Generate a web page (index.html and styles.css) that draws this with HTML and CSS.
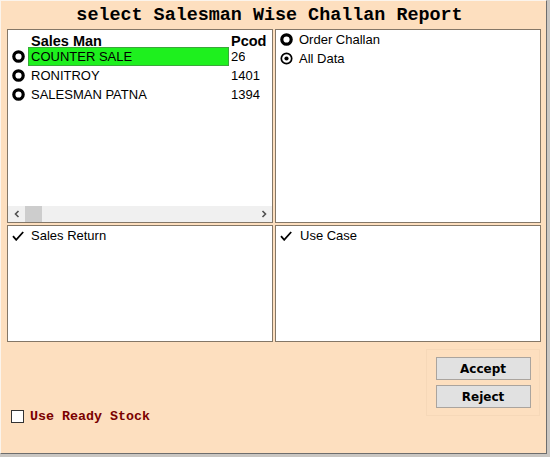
FILE: index.html
```html
<!DOCTYPE html>
<html>
<head>
<meta charset="utf-8">
<link rel="stylesheet" href="styles.css">
</head>
<body>
<div class="window">
  <h1 class="title">select Salesman Wise Challan Report</h1>
  <div class="panels">
    <div class="panel list-panel">
      <div class="list">
        <div class="row head">
          <span class="rcell"></span>
          <span class="name">Sales Man</span>
          <span class="code">Pcod</span>
        </div>
        <div class="row">
          <span class="rcell"><svg class="radio" viewBox="0 0 13 13"><circle cx="6.5" cy="6.5" r="4.7" fill="#fff" stroke="#000" stroke-width="3.2"/></svg></span>
          <span class="name sel">COUNTER SALE</span>
          <span class="code">26</span>
        </div>
        <div class="row">
          <span class="rcell"><svg class="radio" viewBox="0 0 13 13"><circle cx="6.5" cy="6.5" r="4.7" fill="#fff" stroke="#000" stroke-width="3.2"/></svg></span>
          <span class="name">RONITROY</span>
          <span class="code">1401</span>
        </div>
        <div class="row">
          <span class="rcell"><svg class="radio" viewBox="0 0 13 13"><circle cx="6.5" cy="6.5" r="4.7" fill="#fff" stroke="#000" stroke-width="3.2"/></svg></span>
          <span class="name">SALESMAN PATNA</span>
          <span class="code">1394</span>
        </div>
      </div>
      <div class="hscroll">
        <span class="arrow"><svg viewBox="0 0 8 8"><path d="M5.5 1 L2.5 4 L5.5 7" fill="none" stroke="#505050" stroke-width="1.6"/></svg></span>
        <span class="track"><span class="thumb"></span></span>
        <span class="arrow"><svg viewBox="0 0 8 8"><path d="M2.5 1 L5.5 4 L2.5 7" fill="none" stroke="#505050" stroke-width="1.6"/></svg></span>
      </div>
    </div>
    <div class="panel opts">
      <div class="opt">
        <svg class="radio" viewBox="0 0 13 13"><circle cx="6.5" cy="6.5" r="4.7" fill="#fff" stroke="#000" stroke-width="3.2"/></svg>
        <span>Order Challan</span>
      </div>
      <div class="opt">
        <svg class="radio" viewBox="0 0 13 13"><circle cx="6.5" cy="6.5" r="5.2" fill="#fff" stroke="#000" stroke-width="1.7"/><circle cx="6.5" cy="6.5" r="2.1" fill="#000"/></svg>
        <span>All Data</span>
      </div>
    </div>
    <div class="panel opts checks">
      <div class="opt">
        <svg class="check" viewBox="0 0 12 10"><path d="M1 5.2 L4.2 8.8 L11.2 1" fill="none" stroke="#000" stroke-width="1.8"/></svg>
        <span>Sales Return</span>
      </div>
    </div>
    <div class="panel opts checks right">
      <div class="opt">
        <svg class="check" viewBox="0 0 12 10"><path d="M1 5.2 L4.2 8.8 L11.2 1" fill="none" stroke="#000" stroke-width="1.8"/></svg>
        <span>Use Case</span>
      </div>
    </div>
  </div>
  <div class="footer">
    <label class="stock"><span class="box"></span><span>Use Ready Stock</span></label>
    <div class="btns">
      <button class="btn">Accept</button>
      <button class="btn">Reject</button>
    </div>
  </div>
</div>
</body>
</html>
```

FILE: styles.css
```css
* { box-sizing: border-box; }
html, body { margin: 0; padding: 0; }
body { width: 550px; height: 457px; background: #c9c6c2; overflow: hidden; }

.window {
  width: 547px;
  height: 454px;
  background: #fddfbf;
  border-top: 1px solid #fbf4ec;
  border-left: 1px solid #fbf4ec;
  border-right: 1px solid #6d6d6d;
  border-bottom: 1px solid #6d6d6d;
  position: relative;
}

.title {
  margin: 0;
  height: 28px;
  padding: 6px 8px 0 0;
  font: bold 18.4px "Liberation Mono", monospace;
  line-height: 18px;
  text-align: center;
  color: #000;
}

.panels {
  margin-left: 6px;
  width: 534px;
  display: grid;
  grid-template-columns: 266px 266px;
  grid-template-rows: 194px 117px;
  gap: 2px 2px;
}

.panel {
  background: #fff;
  border: 1px solid #847767;
  font: 13px "Liberation Sans", Arial, sans-serif;
  color: #000;
}

.list-panel { display: flex; flex-direction: column; justify-content: space-between; }
.list { padding-top: 1px; }
.row { display: flex; height: 19px; align-items: center; }
.row.head { height: 16px; font-weight: bold; font-size: 14.5px; padding-top: 3px; }
.rcell { width: 20px; display: flex; justify-content: center; padding-left: 1px; }
.name { width: 201px; padding-left: 3px; height: 19px; line-height: 19px; }
.head .name { height: 16px; line-height: 16px; padding-left: 3px; }
.name.sel { background: #1ef01e; outline: 1px solid #3aa83a; outline-offset: -1px; }
.code { padding-left: 2px; white-space: nowrap; overflow: hidden; }
.radio { width: 13px; height: 13px; display: block; }

.hscroll {
  height: 16px;
  background: #f0f0f0;
  display: flex;
  align-items: center;
}
.arrow { width: 17px; height: 16px; display: flex; align-items: center; justify-content: center; }
.arrow svg { width: 8px; height: 8px; display: block; }
.track { flex: 1; height: 16px; position: relative; }
.thumb { position: absolute; left: 0; top: 0; width: 17px; height: 16px; background: #cdcdcd; }

.opts { padding: 0 0 0 4px; }
.opt { display: flex; align-items: center; height: 19px; gap: 6px; }
.checks { padding: 0 0 0 4px; }
.check { width: 12px; height: 10px; display: block; margin-right: 1px; }
.checks .opt { gap: 6px; }
.checks.right .opt { gap: 7px; }

.footer {
  height: 111px;
  display: flex;
  justify-content: space-between;
  padding: 7px 6px 0 10px;
}
.stock {
  align-self: flex-start;
  margin-top: 60px;
  display: flex;
  align-items: center;
  gap: 6px;
  font: bold 13.33px "Liberation Mono", monospace;
  color: #7a0000;
}
.box { width: 13px; height: 13px; border: 1px solid #333; background: #fff; }

.btns {
  align-self: flex-start;
  width: 114px;
  height: 67px;
  border: 1px solid #f6d8b8;
  display: flex;
  flex-direction: column;
  align-items: center;
  padding-top: 7px;
  gap: 5px;
}
.btn {
  width: 95px;
  height: 23px;
  margin: 0;
  padding: 0;
  background: #e1e1e1;
  border: 1px solid #aaa49e;
  font: bold 12px "DejaVu Sans", sans-serif;
  color: #000;
}
```
